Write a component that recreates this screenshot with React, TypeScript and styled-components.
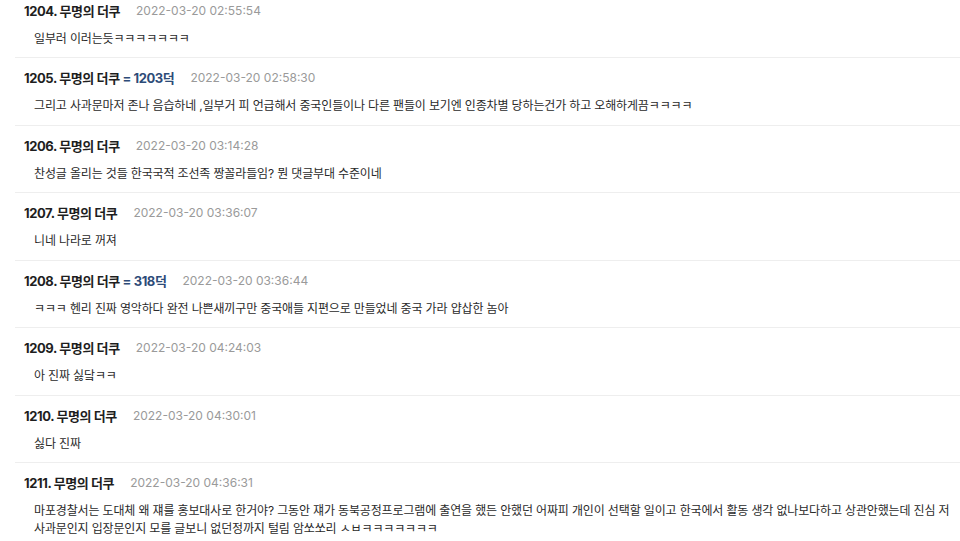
import { createGlobalStyle } from 'styled-components'
import styled from 'styled-components'

type Comment = {
  no: number
  author: string
  score?: string
  date: string
  text: string
}

const comments: Comment[] = [
  { no: 1204, author: '무명의 더쿠', date: '2022-03-20 02:55:54', text: '일부러 이러는듯ㅋㅋㅋㅋㅋㅋㅋ' },
  {
    no: 1205,
    author: '무명의 더쿠',
    score: '= 1203덕',
    date: '2022-03-20 02:58:30',
    text: '그리고 사과문마저 존나 음습하네 ,일부거 피 언급해서 중국인들이나 다른 팬들이 보기엔 인종차별 당하는건가 하고 오해하게끔ㅋㅋㅋㅋ',
  },
  { no: 1206, author: '무명의 더쿠', date: '2022-03-20 03:14:28', text: '찬성글 올리는 것들 한국국적 조선족 짱꼴라들임? 뭔 댓글부대 수준이네' },
  { no: 1207, author: '무명의 더쿠', date: '2022-03-20 03:36:07', text: '니네 나라로 꺼져' },
  {
    no: 1208,
    author: '무명의 더쿠',
    score: '= 318덕',
    date: '2022-03-20 03:36:44',
    text: 'ㅋㅋㅋ 헨리 진짜 영악하다 완전 나쁜새끼구만 중국애들 지편으로 만들었네 중국 가라 얍삽한 놈아',
  },
  { no: 1209, author: '무명의 더쿠', date: '2022-03-20 04:24:03', text: '아 진짜 싫닼ㅋㅋ' },
  { no: 1210, author: '무명의 더쿠', date: '2022-03-20 04:30:01', text: '싫다 진짜' },
  {
    no: 1211,
    author: '무명의 더쿠',
    date: '2022-03-20 04:36:31',
    text: '마포경찰서는 도대체 왜 쟤를 홍보대사로 한거야? 그동안 쟤가 동북공정프로그램에 출연을 했든 안했던 어짜피 개인이 선택할 일이고 한국에서 활동 생각 없나보다하고 상관안했는데 진심 저 사과문인지 입장문인지 모를 글보니 없던정까지 털림 암쏘쏘리 ㅅㅂㅋㅋㅋㅋㅋㅋㅋ',
  },
]

const GlobalStyle = createGlobalStyle`
  body {
    margin: 0;
    background: #fff;
    font-family: Inter, "Noto Sans CJK KR", sans-serif;
    color: #222;
  }
`

export default function App() {
  return (
    <>
      <GlobalStyle />
      <CommentList>
        {comments.map((c) => (
          <CommentItem key={c.no}>
            <CommentHead>
              <Author>
                {c.no}. {c.author}
                {c.score && <Score> {c.score}</Score>}
              </Author>
              <DateText>{c.date}</DateText>
            </CommentHead>
            <CommentBody>{c.text}</CommentBody>
          </CommentItem>
        ))}
      </CommentList>
    </>
  )
}

const CommentList = styled.ul`
  list-style: none;
  margin: 0;
  padding: 0;
`

const CommentItem = styled.li`
  margin-left: 15px;
  padding: 9.5px 0 9.5px 9px;
  border-bottom: 1px solid #eeeeee;

  &:first-child {
    padding-top: 0;
  }
`

const CommentHead = styled.div`
  display: flex;
  align-items: center;
  gap: 16px;
  height: 20px;
`

const Author = styled.span`
  font-size: 13px;
  font-weight: 700;
  letter-spacing: -0.4px;
  color: #1e1e1e;
  white-space: pre;
`

const Score = styled.span`
  color: #2d4b78;
`

const DateText = styled.span`
  font-size: 12px;
  color: #9a9a9a;
`

const CommentBody = styled.p`
  margin: 9.5px 0 0;
  padding: 0 6px 0 10px;
  font-size: 12px;
  line-height: 18px;
  letter-spacing: -0.15px;
  word-break: keep-all;
  color: #2a2a2a;
`
